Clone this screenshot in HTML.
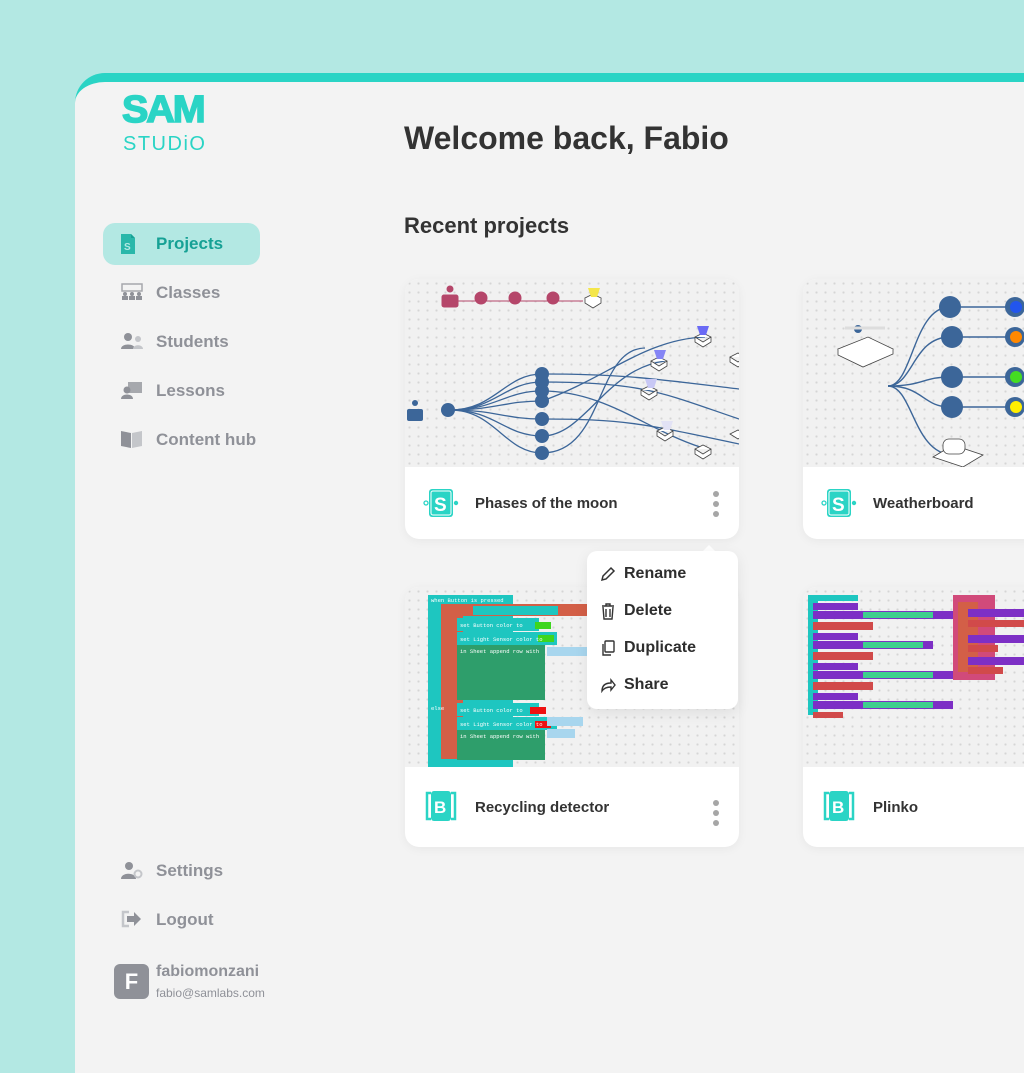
<!DOCTYPE html>
<html><head><meta charset="utf-8"><style>
*{margin:0;padding:0;box-sizing:border-box}
body{width:1024px;height:1024px;overflow:hidden;background:#b3e8e3;font-family:"Liberation Sans",sans-serif;position:relative}
.app{position:absolute;left:75px;top:73px;width:1000px;height:1000px;background:#f3f3f3;border-radius:30px 0 0 0;border-top:9px solid #2ad4c5;overflow:hidden}
.abs{position:absolute}
.nav{position:absolute;left:28px;width:157px;height:42px;border-radius:12px;font-size:17px;color:#8f9198;font-weight:bold;display:flex;align-items:center;padding-left:53px}
.nav svg{position:absolute;left:18px;top:11px}
.card{position:absolute;width:334px;height:260px;background:#fff;border-radius:14px;overflow:hidden;box-shadow:0 2px 10px rgba(0,0,0,.05)}
.card .img{height:188px;background-color:#f1f1f1;background-image:radial-gradient(#d5d5d5 1px,transparent 1.2px);background-size:9px 9px;position:relative;overflow:hidden}
.card .ft{position:absolute;left:0;top:188px;right:0;bottom:0;display:flex;align-items:center;padding-left:70px;font-size:15px;font-weight:bold;color:#333}
.dots{position:absolute;right:20px;top:24px;width:6px}
.dots i{display:block;width:6px;height:6px;border-radius:3px;background:#a6a6a6;margin-bottom:4px}
.menu{position:absolute;left:512px;top:469px;width:151px;height:158px;background:#fff;border-radius:10px;box-shadow:0 4px 14px rgba(0,0,0,.08)}
.menu div{position:absolute;left:37px;font-size:16px;font-weight:bold;color:#2e2e2e}
.menu svg{position:absolute;left:13px}
</style></head><body>
<div class="app">
 <!-- logo -->
 <div class="abs" style="left:47px;top:7px;font-size:38px;font-weight:900;color:#2ad4c5;letter-spacing:-2px;font-family:'Liberation Sans';-webkit-text-stroke:1.5px #2ad4c5;transform:scaleX(1.04);transform-origin:left">SAM</div>
 <div class="abs" style="left:48px;top:51px;font-size:20px;color:#2ad4c5;letter-spacing:1.5px">STUDiO</div>

 <div class="nav" style="top:141px;background:#b3e8e3;color:#16a195">
  <svg width="14" height="20" viewBox="0 0 14 20"><path d="M0 0h10l4 4v16H0z" fill="#2ab7aa"/><path d="M10 0v4h4z" fill="#16a195"/><text x="3" y="16" font-size="10" font-weight="bold" fill="#b3e8e3" font-family="Liberation Sans">S</text></svg>Projects</div>
 <div class="nav" style="top:190px"><svg width="22" height="18"><rect x="1" y="1" width="20" height="7" fill="none" stroke="#a6a8ad" stroke-width="1.5"/><circle cx="4" cy="11" r="2" fill="#8f9198"/><circle cx="11" cy="11" r="2" fill="#8f9198"/><circle cx="18" cy="11" r="2" fill="#8f9198"/><rect x="1" y="13" width="6" height="4" fill="#8f9198"/><rect x="8" y="13" width="6" height="4" fill="#8f9198"/><rect x="15" y="13" width="6" height="4" fill="#8f9198"/></svg>Classes</div>
 <div class="nav" style="top:239px"><svg width="22" height="18"><circle cx="7" cy="5" r="4" fill="#8f9198"/><path d="M0 17c0-6 14-6 14 0z" fill="#8f9198"/><circle cx="17" cy="7" r="3" fill="#c4c6ca"/><path d="M12 17c0-5 10-5 10 0z" fill="#c4c6ca"/></svg>Students</div>
 <div class="nav" style="top:288px"><svg width="22" height="18"><rect x="7" y="1" width="14" height="11" fill="#a6a8ad"/><circle cx="6" cy="9" r="3.5" fill="#8f9198"/><path d="M0 18c0-6 12-6 12 0z" fill="#8f9198"/></svg>Lessons</div>
 <div class="nav" style="top:337px"><svg width="22" height="18"><path d="M0 1l10 2v15L0 16z" fill="#8f9198"/><path d="M11 3l10-2v15l-10 2z" fill="#c4c6ca"/></svg>Content hub</div>

 <div class="nav" style="top:768px"><svg width="22" height="18"><circle cx="8" cy="5" r="4" fill="#8f9198"/><path d="M0 18c0-7 15-7 15 0z" fill="#8f9198"/><circle cx="17" cy="13" r="3.5" fill="none" stroke="#c4c6ca" stroke-width="2"/></svg>Settings</div>
 <div class="nav" style="top:817px"><svg width="22" height="18"><path d="M8 2H2v14h6" fill="none" stroke="#c4c6ca" stroke-width="2.5"/><path d="M6 6h7V2l7 7-7 7v-4H6z" fill="#8f9198"/></svg>Logout</div>
 <div class="abs" style="left:39px;top:882px;width:35px;height:35px;border-radius:6px;background:#8f9198;color:#fff;font-size:22px;font-weight:bold;text-align:center;line-height:35px">F</div>
 <div class="abs" style="left:81px;top:881px;font-size:16px;font-weight:bold;color:#8f9198">fabiomonzani</div>
 <div class="abs" style="left:81px;top:904px;font-size:12px;color:#8f9198">fabio@samlabs.com</div>

 <div class="abs" style="left:329px;top:38px;font-size:32px;font-weight:bold;color:#333">Welcome back, Fabio</div>
 <div class="abs" style="left:329px;top:131px;font-size:22px;font-weight:bold;color:#333">Recent projects</div>

 <!-- card 1 -->
 <div class="card" style="left:330px;top:197px">
  <div class="img"><svg width="334" height="188">
   <g fill="none" stroke="#3c6699" stroke-width="1.3">
    <path d="M45 131C90 131 100 95 137 95"/><path d="M45 131C90 131 100 103 137 103"/><path d="M45 131C90 131 100 112 137 112"/><path d="M45 131C90 131 100 122 137 122"/><path d="M45 131C90 131 100 140 137 140"/><path d="M45 131C90 131 100 157 137 157"/><path d="M45 131C90 131 100 174 137 174"/>
    <path d="M137 95C220 95 250 100 334 110"/><path d="M137 103C240 103 260 115 334 140"/><path d="M137 122C200 100 240 60 300 58"/><path d="M137 140C220 140 240 145 334 165"/><path d="M137 157C180 157 200 90 260 82"/><path d="M137 174C200 174 190 70 240 69"/><path d="M137 112C200 112 240 150 295 168"/>
   </g>
   <g fill="#3c6699"><circle cx="137" cy="95" r="7"/><circle cx="137" cy="103" r="7"/><circle cx="137" cy="112" r="7"/><circle cx="137" cy="122" r="7"/><circle cx="137" cy="140" r="7"/><circle cx="137" cy="157" r="7"/><circle cx="137" cy="174" r="7"/><circle cx="43" cy="131" r="7"/><rect x="2" y="130" width="16" height="12" rx="2"/><circle cx="10" cy="124" r="3"/></g>
   <g fill="#b5466a" stroke="#b5466a" stroke-width="1"><rect x="37" y="16" width="16" height="12" rx="2"/><circle cx="45" cy="10" r="3"/><circle cx="76" cy="19" r="6"/><circle cx="110" cy="19" r="6"/><circle cx="148" cy="19" r="6"/><path d="M53 22H178"/></g>
   <g fill="#fff" stroke="#444" stroke-width=".8"><path d="M180 19l8-4 8 4-8 5z"/><path d="M180 19v5l8 5 8-5v-5"/>
   <path d="M290 58l8-4 8 4-8 5zM290 58v5l8 5 8-5v-5"/><path d="M246 82l8-4 8 4-8 5zM246 82v5l8 5 8-5v-5"/><path d="M236 111l8-4 8 4-8 5zM236 111v5l8 5 8-5v-5"/><path d="M252 152l8-4 8 4-8 5zM252 152v5l8 5 8-5v-5"/><path d="M290 170l8-4 8 4-8 5zM290 170v5l8 5 8-5v-5"/><path d="M325 78l8-4 8 4-8 5zM325 78v5l8 5 8-5v-5"/><path d="M325 155l8-4 8 4-8 5z"/></g>
   <path d="M183 9h12l-3 9h-6z" fill="#f4e64a"/><path d="M292 47h12l-3 9h-6z" fill="#6a6af5"/><path d="M249 71h12l-3 9h-6z" fill="#8585f5"/><path d="M240 100h12l-3 9h-6z" fill="#c8c8f5"/><path d="M256 142h12l-3 9h-6z" fill="#e2e2f5"/>
  </svg></div>
  <div class="ft"><svg class="abs" style="left:18px;top:20px" width="36" height="32"><circle cx="3" cy="16" r="2" fill="none" stroke="#2ad4c5" stroke-width="1.3"/><circle cx="33" cy="16" r="2.2" fill="#2ad4c5"/><rect x="6" y="2" width="24" height="28" rx="3" fill="#2ad4c5"/><rect x="8" y="4" width="20" height="24" rx="2" fill="none" stroke="#fff" stroke-width="1"/><text x="11" y="24" font-size="19" font-weight="bold" fill="#fff" font-family="Liberation Sans">S</text></svg>Phases of the moon<div class="dots"><i></i><i></i><i></i></div></div>
 </div>

 <!-- card 2 -->
 <div class="card" style="left:728px;top:197px">
  <div class="img"><svg width="334" height="188">
   <g fill="none" stroke="#3c6699" stroke-width="1.4"><path d="M85 107C110 107 110 28 147 28"/><path d="M85 107C110 107 110 58 147 58"/><path d="M85 107C120 107 120 98 147 98"/><path d="M85 107C120 107 120 128 147 128"/><path d="M85 107C110 107 110 175 150 176"/><path d="M147 28H210M147 58H210M147 98H210M147 128H210"/></g>
   <g fill="#3c6699"><circle cx="147" cy="28" r="11"/><circle cx="149" cy="58" r="11"/><circle cx="149" cy="98" r="11"/><circle cx="149" cy="128" r="11"/><circle cx="212" cy="28" r="10"/><circle cx="212" cy="58" r="10"/><circle cx="212" cy="98" r="10"/><circle cx="212" cy="128" r="10"/><circle cx="55" cy="50" r="4"/></g>
   <circle cx="213" cy="28" r="6" fill="#2255ee"/><circle cx="213" cy="58" r="6" fill="#ff8800"/><circle cx="213" cy="98" r="6" fill="#44dd22"/><circle cx="213" cy="128" r="6" fill="#ffee00"/>
   <path d="M42 49h40" stroke="#ddd" stroke-width="3"/>
   <g fill="#fff" stroke="#444" stroke-width=".8"><path d="M35 70l30-12 25 12-30 13z"/><path d="M35 70v6l25 12 30-13v-5"/><path d="M130 178l20-12 30 10-20 12z"/><rect x="140" y="160" width="22" height="15" rx="6"/></g>
  </svg></div>
  <div class="ft"><svg class="abs" style="left:18px;top:20px" width="36" height="32"><circle cx="3" cy="16" r="2" fill="none" stroke="#2ad4c5" stroke-width="1.3"/><circle cx="33" cy="16" r="2.2" fill="#2ad4c5"/><rect x="6" y="2" width="24" height="28" rx="3" fill="#2ad4c5"/><rect x="8" y="4" width="20" height="24" rx="2" fill="none" stroke="#fff" stroke-width="1"/><text x="11" y="24" font-size="19" font-weight="bold" fill="#fff" font-family="Liberation Sans">S</text></svg>Weatherboard</div>
 </div>

 <!-- card 3 -->
 <div class="card" style="left:330px;top:505px">
  <div class="img" style="height:180px"><svg width="334" height="180">
   <rect x="23" y="8" width="85" height="172" fill="#1ec6c0"/><rect x="36" y="16" width="22" height="156" fill="#d35f47"/>
   <rect x="23" y="8" width="85" height="9" fill="#1ec6c0"/><rect x="40" y="17" width="160" height="12" fill="#d35f47"/><rect x="68" y="19" width="85" height="9" fill="#1ec6c0"/>
   <rect x="52" y="31" width="82" height="13" fill="#1ec6c0"/><rect x="52" y="45" width="100" height="13" fill="#1ec6c0"/><rect x="52" y="58" width="88" height="55" fill="#2e9e6b"/>
   <rect x="52" y="116" width="82" height="13" fill="#1ec6c0"/><rect x="52" y="130" width="100" height="13" fill="#1ec6c0"/><rect x="52" y="143" width="88" height="30" fill="#2e9e6b"/>
   <rect x="130" y="35" width="16" height="7" fill="#3ed61e"/><rect x="133" y="48" width="16" height="7" fill="#3ed61e"/><rect x="125" y="120" width="16" height="7" fill="#ee1111"/><rect x="130" y="134" width="16" height="7" fill="#ee1111"/>
   <rect x="142" y="60" width="40" height="9" fill="#a8d6ee"/><rect x="142" y="130" width="36" height="9" fill="#a8d6ee"/><rect x="142" y="142" width="28" height="9" fill="#a8d6ee"/>
   <g font-family="Liberation Mono" font-size="5.5" fill="#fff"><text x="26" y="15">when Button is pressed</text><text x="55" y="40">set Button color to</text><text x="55" y="54">set Light Sensor color to</text><text x="55" y="66">in Sheet append row with</text><text x="55" y="125">set Button color to</text><text x="55" y="139">set Light Sensor color to</text><text x="55" y="151">in Sheet append row with</text><text x="26" y="123">else</text></g>
  </svg></div>
  <div class="ft" style="top:180px"><svg class="abs" style="left:18px;top:22px" width="36" height="34"><rect x="8" y="2" width="20" height="30" rx="3" fill="#2ad4c5"/><path d="M8 4h-4v26h4M28 4h4v26h-4" fill="none" stroke="#2ad4c5" stroke-width="2.5"/><text x="11" y="24" font-size="17" font-weight="bold" fill="#fff" font-family="Liberation Sans">B</text></svg>Recycling detector<div class="dots" style="top:33px"><i></i><i></i><i></i></div></div>
 </div>

 <!-- card 4 -->
 <div class="card" style="left:728px;top:505px">
  <div class="img" style="height:180px"><svg width="334" height="180">
   <rect x="5" y="8" width="10" height="120" fill="#1ec6c0"/><rect x="5" y="8" width="50" height="6" fill="#1ec6c0"/>
   <g fill="#7d2fc5"><rect x="10" y="16" width="45" height="7"/><rect x="10" y="24" width="140" height="8"/><rect x="10" y="46" width="45" height="7"/><rect x="10" y="54" width="120" height="8"/><rect x="10" y="76" width="45" height="7"/><rect x="10" y="84" width="140" height="8"/><rect x="10" y="106" width="45" height="7"/><rect x="10" y="114" width="140" height="8"/></g>
   <g fill="#d14a4a"><rect x="10" y="35" width="60" height="8"/><rect x="10" y="65" width="60" height="8"/><rect x="10" y="95" width="60" height="8"/><rect x="10" y="125" width="30" height="6"/></g>
   <g fill="#3ecf8e"><rect x="60" y="25" width="70" height="6"/><rect x="60" y="55" width="60" height="6"/><rect x="60" y="85" width="70" height="6"/><rect x="60" y="115" width="70" height="6"/></g>
   <rect x="150" y="8" width="42" height="85" fill="#d14a7a"/><rect x="155" y="15" width="20" height="70" fill="#d35f47"/><g fill="#7d2fc5"><rect x="165" y="22" width="60" height="8"/><rect x="165" y="48" width="60" height="8"/><rect x="165" y="70" width="60" height="8"/></g><g fill="#d14a4a"><rect x="165" y="33" width="60" height="7"/><rect x="165" y="58" width="30" height="7"/><rect x="165" y="80" width="35" height="7"/></g>
  </svg></div>
  <div class="ft" style="top:180px"><svg class="abs" style="left:18px;top:22px" width="36" height="34"><rect x="8" y="2" width="20" height="30" rx="3" fill="#2ad4c5"/><path d="M8 4h-4v26h4M28 4h4v26h-4" fill="none" stroke="#2ad4c5" stroke-width="2.5"/><text x="11" y="24" font-size="17" font-weight="bold" fill="#fff" font-family="Liberation Sans">B</text></svg>Plinko</div>
 </div>

 <!-- menu -->
 <div class="abs" style="left:626px;top:463px;width:0;height:0;border-left:8px solid transparent;border-right:8px solid transparent;border-bottom:8px solid #fff"></div>
 <div class="menu">
  <svg style="top:15px" width="16" height="16"><path d="M2 14l1-4 8-8 3 3-8 8z" fill="none" stroke="#333" stroke-width="1.5"/></svg><div style="top:14px">Rename</div>
  <svg style="top:52px" width="16" height="17"><path d="M2 3h12M6 3V1h4v2M3 4l1 12h8l1-12M6 6v8M10 6v8" fill="none" stroke="#333" stroke-width="1.4"/></svg><div style="top:51px">Delete</div>
  <svg style="top:89px" width="16" height="17"><rect x="5" y="1" width="9" height="11" rx="1" fill="none" stroke="#333" stroke-width="1.4"/><path d="M3 4v11h8" fill="none" stroke="#333" stroke-width="1.4"/></svg><div style="top:88px">Duplicate</div>
  <svg style="top:126px" width="16" height="16"><path d="M2 14c0-6 4-8 9-8V3l4 5-4 5v-3c-4 0-7 1-9 4z" fill="none" stroke="#333" stroke-width="1.4"/></svg><div style="top:125px">Share</div>
 </div>
</div>
</body></html>
